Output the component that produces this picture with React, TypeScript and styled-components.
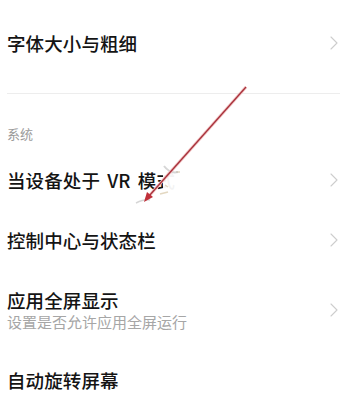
import styled, { createGlobalStyle } from "styled-components";

const GlobalStyle = createGlobalStyle`
  html, body {
    margin: 0;
    padding: 0;
    background: #ffffff;
  }
  body {
    font-family: "Noto Sans CJK SC", "Noto Sans", sans-serif;
    color: #111;
  }
`;

const Page = styled.div`
  position: relative;
  width: 356px;
  height: 414px;
  overflow: hidden;
  background: #fff;
  box-sizing: border-box;
  padding: 13px 16px 0 7px;
  display: flex;
  flex-direction: column;
`;

const Row = styled.div<{ tall?: boolean }>`
  height: ${(p) => (p.tall ? 80 : 60)}px;
  display: flex;
  align-items: center;
  justify-content: space-between;
  flex-shrink: 0;
`;

const Texts = styled.div`
  display: flex;
  flex-direction: column;
  gap: 1px;
`;

const Title = styled.div`
  font-size: 18.5px;
  font-weight: 500;
  line-height: 22px;
  word-spacing: 3px;
  letter-spacing: 0.1px;
  color: #141414;
  white-space: nowrap;
`;

const Sub = styled.div`
  font-size: 15px;
  line-height: 20px;
  color: #a6a6a6;
  white-space: nowrap;
`;

const Divider = styled.div`
  height: 1px;
  background: #ededed;
  margin-top: 20px;
  flex-shrink: 0;
`;

const SectionHeader = styled.div`
  height: 56px;
  box-sizing: border-box;
  padding-top: 31px;
  font-size: 13px;
  line-height: 18px;
  color: #9a9a9a;
  flex-shrink: 0;
`;

const ChevronBox = styled.svg`
  width: 8px;
  height: 14px;
  margin-right: 2px;
  flex-shrink: 0;
`;

const Annotation = styled.svg`
  position: absolute;
  left: 0;
  top: 0;
  width: 356px;
  height: 414px;
  pointer-events: none;
`;

const Chevron = () => (
  <ChevronBox viewBox="0 0 8 14">
    <polyline
      points="1,1 7,7 1,13"
      fill="none"
      stroke="#cdcdcd"
      strokeWidth="1.1"
      strokeLinecap="round"
      strokeLinejoin="round"
    />
  </ChevronBox>
);

type Item = { title: string; sub?: string; arrow?: boolean };

const systemItems: Item[] = [
  { title: "当设备处于 VR 模式", arrow: true },
  { title: "控制中心与状态栏", arrow: true },
  { title: "应用全屏显示", sub: "设置是否允许应用全屏运行", arrow: true },
  { title: "自动旋转屏幕" },
];

const SettingRow = ({ title, sub, arrow }: Item) => (
  <Row tall={!!sub}>
    <Texts>
      <Title>{title}</Title>
      {sub ? <Sub>{sub}</Sub> : null}
    </Texts>
    {arrow ? <Chevron /> : null}
  </Row>
);

const App = () => {
  return (
    <>
      <GlobalStyle />
      <Page>
        <SettingRow title="字体大小与粗细" arrow />
        <Divider />
        <SectionHeader>系统</SectionHeader>
        {systemItems.map((item) => (
          <SettingRow key={item.title} {...item} />
        ))}
        <Annotation viewBox="0 0 356 414">
          <rect x="163" y="166" width="28" height="30" fill="#fff" opacity="0.95" />
          <path d="M176 172 l4 0 M165 185 l3 2 M160 194 l8 -2" stroke="#d8c8a8" strokeWidth="1.5" opacity="0.7" />
          <path d="M164 166 q6 8 14 6" stroke="#bbb" strokeWidth="2" fill="none" opacity="0.6" />
          <path d="M136 203 q8 -4 14 -3" stroke="#bbb" strokeWidth="1.5" fill="none" opacity="0.6" />
          <line x1="246" y1="87" x2="149" y2="196" stroke="#f2c4c4" strokeWidth="3" />
          <line x1="246" y1="87" x2="149" y2="196" stroke="#a8323c" strokeWidth="1.3" />
          <polygon points="144,202 147,192 153,197" fill="#c0303a" />
        </Annotation>
      </Page>
    </>
  );
};

export default App;
